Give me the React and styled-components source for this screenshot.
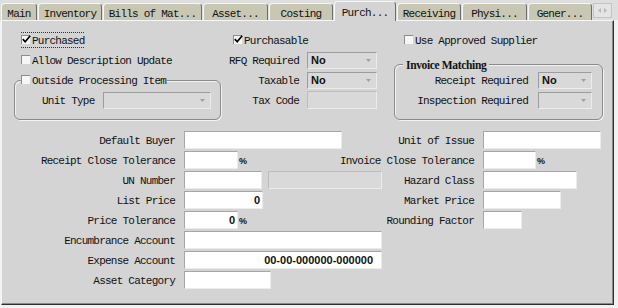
import React from 'react';
import styled, { createGlobalStyle } from 'styled-components';

const GlobalStyle = createGlobalStyle`
  html, body { margin: 0; padding: 0; background: #f2f2f2; }
  #root { width: 618px; height: 308px; }
`;

const PANEL = '#d4d4d4';

const Window = styled.div`
  width: 618px;
  height: 308px;
  overflow: hidden;
  background: #f2f2f2;
  font-family: "Liberation Mono", "DejaVu Sans Mono", monospace;
  font-size: 11px;
  letter-spacing: -0.77px;
  color: #111;
`;

const TabStrip = styled.div`
  display: flex;
  align-items: flex-end;
  gap: 1px;
  height: 20px;
  padding-left: 1px;
  background: #dedede;
  position: relative;
  z-index: 1;
`;

const Tab = styled.div`
  width: ${p => p.$w}px;
  height: ${p => (p.$active ? 20 : 17)}px;
  margin-bottom: ${p => (p.$active ? -1 : 0)}px;
  box-sizing: border-box;
  display: flex;
  align-items: center;
  justify-content: center;
  padding-top: ${p => (p.$active ? 2 : 3)}px;
  background: ${p => (p.$active ? PANEL : '#c8c7b3')};
  border-top: 1px solid #f6f6f6;
  border-left: 1px solid #f6f6f6;
  border-right: 1px solid #6c6c6c;
  border-radius: 4px 4px 0 0;
  white-space: nowrap;
  flex-shrink: 0;
`;

const ScrollButton = styled.div`
  width: 19px;
  height: 15px;
  margin-bottom: 2px;
  box-sizing: border-box;
  background: #e4e4e4;
  border: 1px solid #c4c4c4;
  display: flex;
  align-items: center;
  justify-content: center;
  flex-shrink: 0;
`;

const Panel = styled.div`
  margin-left: 1px;
  width: 613px;
  height: 285px;
  box-sizing: border-box;
  background: ${PANEL};
  border-top: 1px solid #f6f6f6;
  border-left: 1px solid #f6f6f6;
  border-right: 1px solid #2e2e2e;
  border-bottom: 1px solid #2e2e2e;
  box-shadow: inset -1px -1px 0 #8a8a8a;
`;

const Top = styled.div`
  display: flex;
  align-items: flex-start;
  padding-top: 9px;
`;

const Column = styled.div`
  display: flex;
  flex-direction: column;
  width: ${p => p.$w}px;
  margin-left: ${p => p.$ml || 0}px;
  flex-shrink: 0;
`;

const Row = styled.div`
  display: flex;
  align-items: center;
  height: ${p => p.$h || 20}px;
  gap: ${p => p.$gap || 0}px;
  padding-left: ${p => p.$pl || 0}px;
  margin-top: ${p => p.$mt || 0}px;
`;

const Label = styled.span`
  white-space: nowrap;
  padding-top: 2px;
  width: ${p => (p.$w ? `${p.$w}px` : 'auto')};
  text-align: ${p => (p.$w ? 'right' : 'left')};
  flex-shrink: 0;
`;

const CheckWrap = styled.span`
  display: inline-flex;
  align-items: center;
  gap: 2px;
  height: 16px;
  box-sizing: border-box;
  border-top: 1px dotted ${p => (p.$focus ? '#333' : 'transparent')};
  border-bottom: 1px dotted ${p => (p.$focus ? '#333' : 'transparent')};
  white-space: nowrap;
`;

const CheckText = styled.span`
  padding-top: 2px;
`;

const Box = styled.span`
  width: 9px;
  height: 9px;
  box-sizing: border-box;
  background: #f6f6f6;
  border-top: 1px solid #8c8c8c;
  border-left: 1px solid #8c8c8c;
  position: relative;
  flex-shrink: 0;
  margin-top: -1px;
`;

const CheckMark = styled.svg`
  position: absolute;
  left: 0;
  top: -1px;
  width: 9px;
  height: 9px;
  overflow: visible;
`;

function Check({ label, checked, focus }) {
  return (
    <CheckWrap $focus={focus}>
      <Box>
        {checked && (
          <CheckMark viewBox="0 0 9 9">
            <path d="M0.8 4.2 L3.2 6.8 L8.2 0.8" fill="none" stroke="#000" strokeWidth="1.7" />
          </CheckMark>
        )}
      </Box>
      <CheckText>{label}</CheckText>
    </CheckWrap>
  );
}

const Group = styled.fieldset`
  margin: ${p => p.$mt || 0}px 0 0 0;
  padding: 0 0 10px 0;
  min-width: 0;
  width: ${p => p.$w}px;
  box-sizing: border-box;
  border: 1px solid #8a8a8a;
  border-radius: 6px;
  box-shadow: inset 1px 1px 0 #f2f2f2, 1px 1px 0 #f2f2f2;
`;

const Legend = styled.legend`
  display: flex;
  align-items: center;
  height: 14px;
  margin-left: ${p => p.$ml}px;
  padding: 0 ${p => p.$pr}px 0 ${p => p.$pl}px;
  background: ${PANEL};
`;

const LegendTitle = styled.span`
  font-family: "Liberation Serif", "Times New Roman", serif;
  font-weight: bold;
  font-size: 11.5px;
  letter-spacing: -0.35px;
  padding-top: 1px;
`;

const ComboBox = styled.div`
  width: ${p => p.$w}px;
  height: 17px;
  box-sizing: border-box;
  background: #d9d9d9;
  border-top: 1px solid #9c9c9c;
  border-left: 1px solid #9c9c9c;
  border-right: 1px solid #ececec;
  border-bottom: 1px solid #ececec;
  display: flex;
  align-items: center;
  justify-content: space-between;
  padding: 0 5px 0 3px;
  flex-shrink: 0;
`;

const ComboValue = styled.span`
  font-family: "Liberation Sans", Arial, sans-serif;
  font-weight: bold;
  font-size: 11px;
  letter-spacing: 0;
`;

function Combo({ w, value }) {
  return (
    <ComboBox $w={w}>
      <ComboValue>{value || ''}</ComboValue>
      <svg width="5" height="3" viewBox="0 0 5 3">
        <path d="M0 0 H5 L2.5 3 Z" fill="#a0a0a0" />
      </svg>
    </ComboBox>
  );
}

const Form = styled.div`
  display: grid;
  grid-template-columns: 173px 140px 141px 1fr;
  grid-auto-rows: 18px;
  column-gap: 9px;
  row-gap: 2px;
  align-items: center;
  margin-top: 11px;
`;

const FormLabel = styled.span`
  text-align: right;
  white-space: nowrap;
  padding-top: 2px;
`;

const Cell = styled.div`
  display: flex;
  align-items: center;
  gap: ${p => p.$gap || 0}px;
  min-width: 0;
  height: 18px;
`;

const Field = styled.div`
  width: ${p => p.$w}px;
  height: 18px;
  box-sizing: border-box;
  background: ${p => (p.$disabled ? '#d9d9d9' : '#fff')};
  border-top: 1px solid ${p => (p.$disabled ? '#bcbcbc' : '#a6a6a6')};
  border-left: 1px solid ${p => (p.$disabled ? '#bcbcbc' : '#a6a6a6')};
  border-right: 1px solid #ececec;
  border-bottom: 1px solid #ececec;
  display: flex;
  align-items: center;
  justify-content: flex-end;
  padding-right: ${p => p.$pr ?? 2}px;
  font-family: "Liberation Sans", Arial, sans-serif;
  font-weight: bold;
  font-size: 11px;
  letter-spacing: 0;
  white-space: nowrap;
  overflow: hidden;
  flex-shrink: 0;
`;

const Percent = styled.span`
  font-family: "Liberation Sans", Arial, sans-serif;
  font-weight: bold;
  font-size: 9px;
  letter-spacing: 0;
  margin-left: 1px;
  padding-top: 2px;
`;

const tabs = [
  { label: 'Main', w: 36 },
  { label: 'Inventory', w: 64 },
  { label: 'Bills of Mat...', w: 99 },
  { label: 'Asset...', w: 65 },
  { label: 'Costing', w: 64 },
  { label: 'Purch...', w: 62, active: true },
  { label: 'Receiving', w: 64 },
  { label: 'Physi...', w: 65 },
  { label: 'Gener...', w: 64 },
];

const rows = [
  { l: 'Default Buyer', f: [{ w: 158 }], r: 'Unit of Issue', rf: [{ w: 118 }] },
  { l: 'Receipt Close Tolerance', f: [{ w: 54 }], pct: true, r: 'Invoice Close Tolerance', rf: [{ w: 53 }], rpct: true },
  { l: 'UN Number', f: [{ w: 78 }, { w: 114, disabled: true }], r: 'Hazard Class', rf: [{ w: 94 }] },
  { l: 'List Price', f: [{ w: 79, v: '0' }], r: 'Market Price', rf: [{ w: 78 }] },
  { l: 'Price Tolerance', f: [{ w: 54, v: '0' }], pct: true, r: 'Rounding Factor', rf: [{ w: 39 }] },
  { l: 'Encumbrance Account', f: [{ w: 198 }] },
  { l: 'Expense Account', f: [{ w: 198, v: '00-00-000000-000000', pr: 8 }] },
  { l: 'Asset Category', f: [{ w: 87 }] },
];

function Fields({ list, pct }) {
  return (
    <Cell $gap={list.length > 1 ? 6 : 0}>
      {list.map((f, i) => (
        <Field key={i} $w={f.w} $disabled={f.disabled} $pr={f.pr}>
          {f.v || ''}
        </Field>
      ))}
      {pct && <Percent>%</Percent>}
    </Cell>
  );
}

export default function App() {
  return (
    <>
      <GlobalStyle />
      <Window>
        <TabStrip>
          {tabs.map(t => (
            <Tab key={t.label} $w={t.w} $active={t.active}>
              {t.label}
            </Tab>
          ))}
          <ScrollButton>
            <svg width="9" height="5" viewBox="0 0 9 5">
              <path d="M0 2.5 L3 0 V5 Z M9 2.5 L6 0 V5 Z" fill="#b8b8b8" />
            </svg>
          </ScrollButton>
        </TabStrip>
        <Panel>
          <Top>
            <Column $w={207} $ml={12}>
              <Row $pl={7}>
                <Check label="Purchased" checked focus />
              </Row>
              <Row $pl={7}>
                <Check label="Allow Description Update" />
              </Row>
              <Group $w={207} $mt={3}>
                <Legend $ml={6} $pl={0} $pr={1}>
                  <Check label="Outside Processing Item" />
                </Legend>
                <Row $h={18} $mt={4} $pl={27} $gap={9}>
                  <Label>Unit Type</Label>
                  <Combo w={108} />
                </Row>
              </Group>
            </Column>
            <Column $w={156}>
              <Row $pl={12}>
                <Check label="Purchasable" checked />
              </Row>
              <Row $gap={8}>
                <Label $w={78}>RFQ Required</Label>
                <Combo w={70} value="No" />
              </Row>
              <Row $gap={8}>
                <Label $w={78}>Taxable</Label>
                <Combo w={70} value="No" />
              </Row>
              <Row $gap={8}>
                <Label $w={78}>Tax Code</Label>
                <Field $w={70} $disabled />
              </Row>
            </Column>
            <Column $w={209} $ml={17}>
              <Row $pl={10}>
                <Check label="Use Approved Supplier" />
              </Row>
              <Group $w={209} $mt={7}>
                <Legend $ml={8} $pl={3} $pr={3}>
                  <LegendTitle>Invoice Matching</LegendTitle>
                </Legend>
                <Row $h={18} $gap={10}>
                  <Label $w={133}>Receipt Required</Label>
                  <Combo w={54} value="No" />
                </Row>
                <Row $h={18} $mt={2} $gap={10}>
                  <Label $w={133}>Inspection Required</Label>
                  <Combo w={54} />
                </Row>
              </Group>
            </Column>
          </Top>
          <Form>
            {rows.map(r => (
              <React.Fragment key={r.l}>
                <FormLabel>{r.l}</FormLabel>
                <Fields list={r.f} pct={r.pct} />
                <FormLabel>{r.r || ''}</FormLabel>
                {r.rf ? <Fields list={r.rf} pct={r.rpct} /> : <Cell />}
              </React.Fragment>
            ))}
          </Form>
        </Panel>
      </Window>
    </>
  );
}
